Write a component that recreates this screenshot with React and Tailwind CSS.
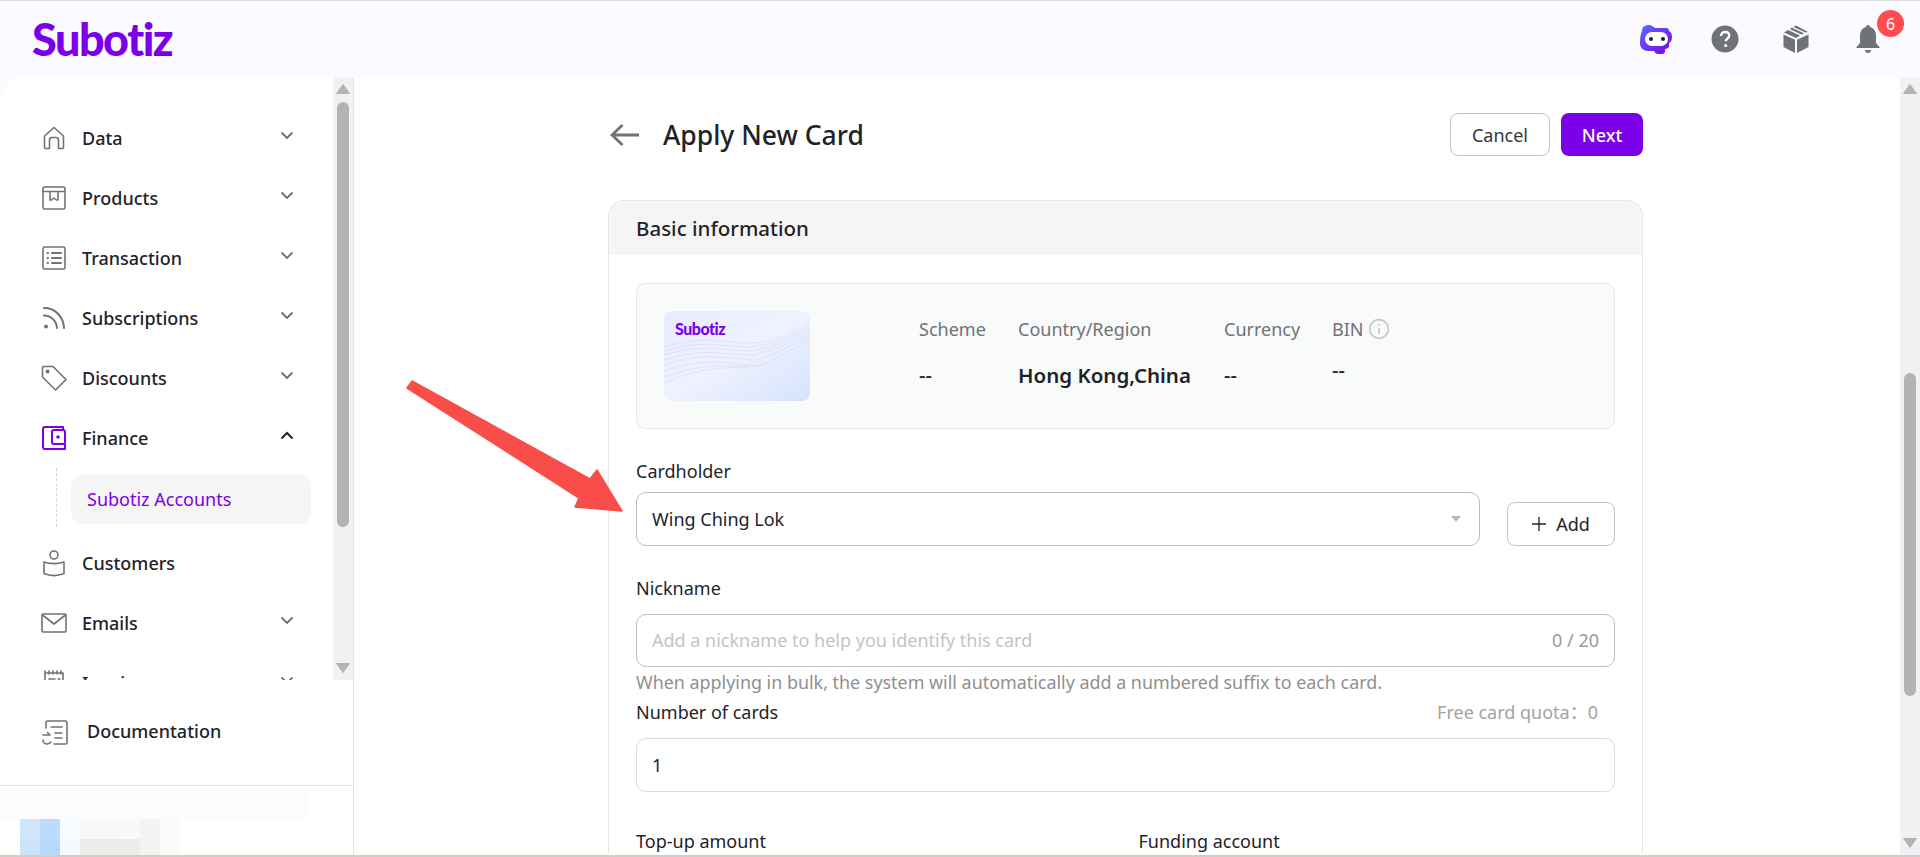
import React from 'react';

const ChevronDown = () => (
  <svg width="14" height="9" viewBox="0 0 14 9" fill="none" stroke="#6b6e73" strokeWidth="1.8"><path d="M1.5 1.5 7 7l5.500-5.500" /></svg>
);

const ChevronUp = () => (
  <svg width="14" height="9" viewBox="0 0 14 9" fill="none" stroke="#1f2329" strokeWidth="2"><path d="M1.500 7.500 7 2l5.500 5.500" /></svg>
);

const stroke = { fill: 'none', stroke: '#6f7277', strokeWidth: 1.6, strokeLinejoin: 'round', strokeLinecap: 'round' };

const icons = {
  data: (
    <svg width="26" height="26" viewBox="0 0 26 26" {...stroke}>
      <path d="M3.500 11 13 2.500 22.500 11v11.500a1 1 0 0 1-1 1h-4V15a2.500 2.500 0 0 0-2.500-2.500h-4A2.500 2.500 0 0 0 8.500 15v8.500h-4a1 1 0 0 1-1-1Z" />
    </svg>
  ),
  products: (
    <svg width="26" height="26" viewBox="0 0 26 26" {...stroke}>
      <rect x="2" y="2" width="22" height="22" rx="1.500" />
      <path d="M2.500 6.500h21" />
      <path d="M9 6.500v8.500h1.500l2.500-2 2.500 2H17V6.500" />
    </svg>
  ),
  transaction: (
    <svg width="26" height="26" viewBox="0 0 26 26" {...stroke}>
      <rect x="2" y="2" width="22" height="22" rx="1.500" />
      <path d="M11 8h9M11 13h9M11 18h9M6.500 8h.5M6.500 13h.5M6.500 18h.5" strokeWidth="2" />
    </svg>
  ),
  subscriptions: (
    <svg width="26" height="26" viewBox="0 0 26 26" {...stroke} strokeWidth="2">
      <path d="M3 3c11 0 19.500 8.500 20 20M3 10.500c7 0 12.500 5.500 13 12.500" />
      <circle cx="5" cy="21.500" r="2" fill="#6f7277" stroke="none" />
    </svg>
  ),
  discounts: (
    <svg width="28" height="28" viewBox="0 0 28 28" {...stroke}>
      <path d="M2.500 3.500a1 1 0 0 1 1-1h9.500L26 15.500 15.500 26 2.500 13Z" />
      <circle cx="7.500" cy="7.500" r="1.200" fill="#6f7277" />
    </svg>
  ),
  finance: (
    <svg width="26" height="26" viewBox="0 0 26 26" fill="none" stroke="#7b00e8" strokeWidth="2" strokeLinejoin="round">
      <path d="M2 4a2 2 0 0 1 2-2h18v3M2 4v18a2 2 0 0 0 2 2h20v-5" />
      <rect x="11" y="5" width="13" height="14" rx="2" />
      <circle cx="17" cy="12" r="1.800" fill="#7b00e8" stroke="none" />
    </svg>
  ),
  customers: (
    <svg width="26" height="28" viewBox="0 0 26 28" {...stroke}>
      <circle cx="13" cy="6" r="4" />
      <path d="M3 13c6 2 14 2 20 0v11.500c-6 2.500-14 2.500-20 0Z" />
    </svg>
  ),
  emails: (
    <svg width="28" height="22" viewBox="0 0 28 22" {...stroke}>
      <rect x="2" y="2" width="24" height="18" rx="1" />
      <path d="m2.500 3 11.500 9 11.500-9" />
    </svg>
  ),
  invoice: (
    <svg width="22" height="26" viewBox="0 0 22 26" {...stroke}>
      <path d="M2 3h18v21H2ZM2 1v3M6 1v3M10 1v3M14 1v3M18 1v3M6 9h6M15 9h2" />
    </svg>
  ),
  documentation: (
    <svg width="28" height="28" viewBox="0 0 28 28" {...stroke}>
      <path d="M5 10V4.500a1.500 1.500 0 0 1 1.500-1.500h18A1.500 1.500 0 0 1 26 4.500v20a1.500 1.500 0 0 1-1.500 1.500H13" />
      <path d="M10 9h11M14 15h7M14 20h7M2 17h7l-2.500-2.500M2 22c0 2.500 2 4 4 4s3-1 4-2" />
    </svg>
  ),
};

const navItems = [
  { key: 'data', label: 'Data' },
  { key: 'products', label: 'Products' },
  { key: 'transaction', label: 'Transaction' },
  { key: 'subscriptions', label: 'Subscriptions' },
  { key: 'discounts', label: 'Discounts' },
];

function NavItem({ icon, label, arrow = 'down' }) {
  return (
    <div className="flex h-[60px] items-center">
      <span className="flex w-[28px] justify-center">{icon}</span>
      <span className="ml-[14px] text-[18px] font-medium text-[#1f2329]">{label}</span>
      {arrow === 'down' && <span className="ml-auto mb-[6px] flex"><ChevronDown /></span>}
      {arrow === 'up' && <span className="ml-auto mb-[6px] flex"><ChevronUp /></span>}
    </div>
  );
}

function ScrollTrack({ thumbTop, thumbHeight }) {
  return (
    <div className="flex w-[20px] shrink-0 flex-col items-center bg-[#f1f1f3]">
      <svg className="mt-[7px] shrink-0" width="14" height="10" viewBox="0 0 14 10"><path d="M7 .5 13.500 9.500H.5Z" fill="#b3b3b3" stroke="#b3b3b3" strokeLinejoin="round" /></svg>
      <div className="w-[12px] rounded-full bg-[#b3b3b3]" style={{ marginTop: thumbTop, height: thumbHeight }} />
      <svg className="mt-auto mb-[7px] shrink-0" width="14" height="10" viewBox="0 0 14 10"><path d="M7 9.500 13.500 .5H.5Z" fill="#b3b3b3" stroke="#b3b3b3" strokeLinejoin="round" /></svg>
    </div>
  );
}

const mosaic = [
  ['bg-[#d2e6fb]', 'bg-[#bcdcfb]', 'bg-[#f7fbfe]', 'bg-[#f8f8f8]', 'bg-[#f8f8f8]', 'bg-[#f9f9f9]', 'bg-[#f4f4f4]', 'bg-[#fbfbfb]'],
  ['bg-[#cbe3fb]', 'bg-[#b5d9fb]', 'bg-[#f6fafe]', 'bg-[#ececec]', 'bg-[#ececec]', 'bg-[#ececec]', 'bg-[#f3f3f3]', 'bg-[#fbfbfb]'],
];

function Sidebar() {
  return (
    <aside className="flex w-[354px] shrink-0 flex-col overflow-hidden rounded-tl-[26px] border-r border-[#e4e4e6] bg-white">
      <div className="flex h-[603px] shrink-0">
        <nav className="min-w-0 flex-1 overflow-hidden pt-[31px] pr-[39px] pl-[40px]">
          {navItems.map((item) => (
            <NavItem key={item.key} icon={icons[item.key]} label={item.label} />
          ))}
          <NavItem icon={icons.finance} label="Finance" arrow="up" />
          <div className="ml-[16px] -mr-[17px] border-l border-dashed border-[#d4d4d4] pt-[7px] pb-[3px] pl-[14px]">
            <div className="flex h-[49px] items-center rounded-[12px] bg-[#f5f5f5] pl-[16px] text-[18px] text-[#7b00e8]">
              Subotiz Accounts
            </div>
          </div>
          <div className="h-[6px]" />
          <NavItem icon={icons.customers} label="Customers" arrow="none" />
          <NavItem icon={icons.emails} label="Emails" />
          <NavItem icon={icons.invoice} label="Invoice" />
        </nav>
        <ScrollTrack thumbTop={8} thumbHeight={425} />
      </div>
      <div className="flex h-[106px] shrink-0 items-center border-b border-[#e4e4e6] pb-[2px] pl-[41px]">
        <span className="flex w-[28px] justify-center">{icons.documentation}</span>
        <span className="ml-[18px] text-[18px] font-medium text-[#1f2329]">Documentation</span>
      </div>
      <div className="flex-1 overflow-hidden pt-[7px]">
        <div className="h-[26px] w-[307px] bg-[#fcfcfc]" />
        <div className="ml-[20px]">
          {mosaic.map((row, i) => (
            <div key={i} className="flex">
              {row.map((color, j) => (
                <div key={j} className={`h-[20px] w-[20px] ${color}`} />
              ))}
            </div>
          ))}
        </div>
      </div>
    </aside>
  );
}

function InfoColumn({ label, value, width, bold }) {
  return (
    <div className={`${width} shrink-0`}>
      <div className="text-[18px] leading-[24px] text-[#6f7277]">{label}</div>
      <div className={`mt-[22px] leading-[24px] text-[#1f2329] ${bold ? 'text-[20.500px] font-semibold' : 'text-[20px] font-medium'}`}>{value}</div>
    </div>
  );
}

function CardPreview() {
  return (
    <div className="relative h-[90px] w-[146px] shrink-0 overflow-hidden rounded-[8px] bg-linear-to-br from-[#e8ebfe] via-[#eff2fe] to-[#d5e2fd] pt-[8px] pl-[11px]">
      <svg className="absolute inset-0" width="146" height="90" viewBox="0 0 146 90" fill="none" stroke="#ccd3f5" strokeWidth="0.5">
        <path d="M0 36C40 24 60 32 85 32 110 32 130 22 146 14" />
        <path d="M0 40C40 28 60 36 85 36 110 34 130 24 146 17" />
        <path d="M0 44C40 32 60 40 88 40 110 36 130 27 146 20" />
        <path d="M0 49C40 36 60 44 90 44 112 38 130 30 146 23" />
        <path d="M0 54C40 40 60 48 92 49 114 42 130 33 146 26" />
        <path d="M0 60C40 46 60 52 95 55 116 46 132 36 146 29" />
        <path d="M0 66C40 52 60 55 90 55" />
        <path d="M0 72C36 56 60 57 85 56" />
      </svg>
      <span className="relative block text-[16px] leading-[20px] font-black tracking-[-0.5px] text-[#7b00e8]" style={{ fontFamily: 'Lato, sans-serif' }}>Subotiz</span>
    </div>
  );
}

function Main() {
  return (
    <main className="flex min-w-0 flex-1 bg-white">
      <div className="min-w-0 flex-1 overflow-hidden pl-[254px] pr-[257px]">
        <div className="flex h-[123px] items-start pt-[36px]">
          <svg className="mt-[10px] ml-[2px]" width="30" height="24" viewBox="0 0 30 24" fill="none" stroke="#6f7277" strokeWidth="2.800"><path d="M29 12H2M12.500 2 2 12l10.500 10" /></svg>
          <h1 className="ml-[23px] text-[26.500px] leading-[44px] font-medium text-[#1f2329]">Apply New Card</h1>
          <button className="ml-auto h-[43px] w-[100px] rounded-[8px] border border-[#c4c4c4] bg-white pt-[1px] text-[18px] text-[#33363b]">Cancel</button>
          <button className="ml-[11px] h-[43px] w-[82px] rounded-[8px] bg-[#7b00e8] pt-[1px] text-[18px] font-medium text-white">Next</button>
        </div>

        <section className="rounded-t-[16px] border border-[#e6e6e6] border-b-0">
          <div className="flex h-[54px] items-center rounded-t-[16px] bg-[#f5f5f5] pt-[1px] pl-[27px] text-[20.500px] font-medium text-[#1f2329]">
            Basic information
          </div>
          <div className="px-[27px] pt-[28px]">
            <div className="flex h-[146px] items-center rounded-[10px] border border-[#e6e6e6] bg-[#f9fafa] pl-[27px]">
              <CardPreview />
              <div className="ml-[109px] flex -translate-y-[4px]">
                <InfoColumn label="Scheme" value="--" width="w-[99px]" />
                <InfoColumn label="Country/Region" value="Hong Kong,China" width="w-[206px]" bold />
                <InfoColumn label="Currency" value="--" width="w-[108px]" />
                <div>
                  <div className="flex items-center gap-[5px] text-[18px] leading-[24px] text-[#6f7277]">
                    BIN
                    <svg width="22" height="22" viewBox="0 0 20 20" fill="none" stroke="#c4c6ca" strokeWidth="1.500"><circle cx="10" cy="10" r="8.500" /><path d="M10 9v5.500M10 5.500v1.500" /></svg>
                  </div>
                  <div className="mt-[17px] text-[20px] leading-[24px] font-medium text-[#1f2329]">--</div>
                </div>
              </div>
            </div>

            <div className="mt-[30px] text-[18px] leading-[24px] text-[#1f2329]">Cardholder</div>
            <div className="mt-[9px] flex items-end justify-between">
              <div className="flex h-[54px] w-[844px] items-center justify-between rounded-[10px] border border-[#bdbdbd] pr-[18px] pl-[15px] text-[18px] text-[#1f2329]">
                Wing Ching Lok
                <svg width="10" height="6" viewBox="0 0 10 6"><path d="M0 0h10L5 6Z" fill="#b8b8b8" /></svg>
              </div>
              <button className="flex h-[44px] w-[108px] items-center justify-center gap-[10px] rounded-[8px] border border-[#c4c4c4] text-[18px] text-[#1f2329]">
                <svg width="14" height="14" viewBox="0 0 14 14" fill="none" stroke="#1f2329" strokeWidth="1.300"><path d="M7 0v14M0 7h14" /></svg>
                Add
              </button>
            </div>

            <div className="mt-[30px] text-[18px] leading-[24px] text-[#1f2329]">Nickname</div>
            <div className="mt-[14px] flex h-[53px] items-center justify-between rounded-[10px] border border-[#bdbdbd] pr-[15px] pl-[15px] text-[18px]">
              <input readOnly placeholder="Add a nickname to help you identify this card" className="min-w-0 flex-1 outline-none placeholder:text-[#c4c4c4]" />
              <span className="text-[#9a9a9a]">0 / 20</span>
            </div>
            <div className="mt-[3px] text-[17.900px] leading-[24px] text-[#8f8f8f]">When applying in bulk, the system will automatically add a numbered suffix to each card.</div>

            <div className="mt-[6px] flex justify-between pr-[17px] text-[18px] leading-[24px]">
              <span className="text-[#1f2329]">Number of cards</span>
              <span className="text-[#a3a3a3]">Free card quota：0</span>
            </div>
            <div className="mt-[14px] flex h-[54px] items-center rounded-[10px] border border-[#dcdcdc] pl-[15px] text-[18px] text-[#1f2329]">1</div>

            <div className="mt-[37px] grid grid-cols-2 text-[18px] leading-[24px] text-[#1f2329]">
              <span>Top-up amount</span>
              <span className="pl-[13px]">Funding account</span>
            </div>
          </div>
        </section>
      </div>
      <ScrollTrack thumbTop={279} thumbHeight={323} />
    </main>
  );
}

function Header() {
  return (
    <header className="flex h-[76px] shrink-0 items-center pr-[40px] pl-[32px]">
      <span className="text-[45px] leading-none font-black tracking-[-1.500px] text-[#7b00e8]" style={{ fontFamily: 'Lato, sans-serif' }}>Subotiz</span>
      <div className="ml-auto flex items-center">
        <svg width="34" height="30" viewBox="0 0 34 30">
          <defs>
            <linearGradient id="bot" x1="0" y1="0" x2="1" y2="1">
              <stop offset="0" stopColor="#5b6cff" />
              <stop offset="1" stopColor="#7b00e8" />
            </linearGradient>
          </defs>
          <path d="M3 7c0-4 3-6 7-6 3 0 4 2 6 3h11c2 0 3 1 3 3 2 1 3 3 3 6 0 3-1 5-3 6v3c0 2-2 3-4 3v2c0 2-1 3-3 3h-4c-2 0-3-1-4-3H9c-4 0-8-3-8-7 0-4 0-9 2-13Z" fill="url(#bot)" />
          <rect x="6" y="8" width="23" height="14" rx="7" fill="#fff" />
          <circle cx="12" cy="15" r="2" fill="#1f2329" />
          <circle cx="24" cy="15" r="2" fill="#1f2329" />
        </svg>
        <svg className="ml-[38px]" width="28" height="28" viewBox="0 0 28 28">
          <circle cx="14" cy="14" r="13.500" fill="#6f7277" />
          <path d="M10 11c0-2.500 1.800-4 4.200-4 2.300 0 4 1.400 4 3.500 0 3-3.400 3-3.400 5.800" fill="none" stroke="#fff" strokeWidth="2.400" />
          <circle cx="14.700" cy="20.500" r="1.600" fill="#fff" />
        </svg>
        <svg className="ml-[44px]" width="26" height="28" viewBox="0 0 26 28" fill="#6f7277">
          <path d="M13 13 1 7.500 5 5l12 5.500ZM18.500 9.500 6.500 4 9 2.700l12 5.500ZM22.500 7.500 10.500 2 13 .5 25 7Z" />
          <path d="M.5 9.500 12 14.800V28L.5 22ZM25.500 9.500 14 14.800V28l11.500-6Z" />
        </svg>
        <div className="relative ml-[47px] flex">
          <svg width="24" height="28" viewBox="0 0 24 28" fill="#6f7277">
            <path d="M12 0c1.500 0 2 1 2 2 4 1 6 4.500 6 9v7l3.500 4v1H.5v-1L4 18v-7c0-4.500 2-8 6-9 0-1 .5-2 2-2Z" />
            <path d="M9 25h6c0 1.700-1.300 3-3 3s-3-1.300-3-3Z" />
          </svg>
          <span className="absolute -top-[15px] left-[21px] flex h-[27px] w-[27px] items-center justify-center rounded-full bg-[#ff4d4f] text-[16px] text-white">6</span>
        </div>
      </div>
    </header>
  );
}

export default function App() {
  return (
    <div className="relative flex h-screen flex-col overflow-hidden border-t border-b-2 border-t-[#e0e0e0] border-b-[#d0ccc8] bg-[#fbfaff]" style={{ fontFamily: '"Noto Sans", "Noto Sans CJK SC", sans-serif' }}>
      <Header />
      <div className="flex min-h-0 flex-1">
        <Sidebar />
        <Main />
      </div>
      {/* red annotation arrow pasted over the page */}
      <svg className="absolute top-0 left-0" width="640" height="520" viewBox="0 0 640 520">
        <path d="M412 380 590 478 597 469 622 510 575 506 579 497 407 387Z" fill="#f94d4a" stroke="#f94d4a" strokeWidth="1.500" strokeLinejoin="round" />
      </svg>
    </div>
  );
}
